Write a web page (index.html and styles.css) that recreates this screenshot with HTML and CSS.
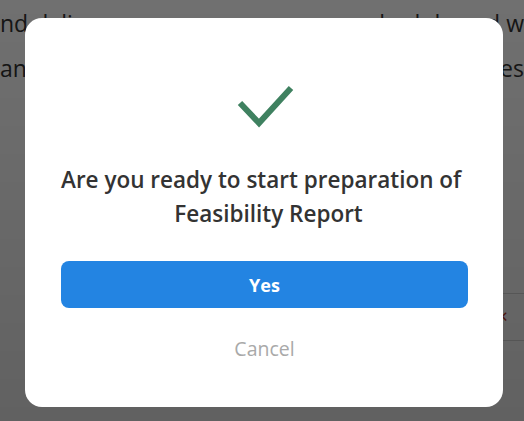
FILE: index.html
```html
<!DOCTYPE html>
<html lang="en">
<head>
<meta charset="utf-8">
<title>Confirm</title>
<link rel="stylesheet" href="styles.css">
</head>
<body>
<div class="page">
  <div class="bg-line bg-line-1"><span>nd delivery</span><span>schedule and w</span></div>
  <div class="bg-line bg-line-2"><span>and</span><span>quantities</span></div>
  <div class="bg-row">
    <span class="bg-x">&#x2715;</span>
  </div>
</div>

<div class="overlay">
  <div class="modal">
    <svg class="check" width="60" height="44" viewBox="0 0 60 44" aria-hidden="true">
      <polyline points="5,19 24,39 56,4" fill="none" stroke="#3f8160" stroke-width="6"/>
    </svg>
    <h2 class="title"><span class="title-line title-line-1">Are you ready to start preparation of</span> <span class="title-line title-line-2">Feasibility Report</span></h2>
    <button class="btn-yes" type="button">Yes</button>
    <button class="btn-cancel" type="button">Cancel</button>
  </div>
</div>
</body>
</html>
```
FILE: styles.css
```css
* { box-sizing: border-box; }
html, body { margin: 0; padding: 0; }
body {
  width: 524px;
  height: 421px;
  overflow: hidden;
  background: #ffffff;
  font-family: "Open Sans", "Noto Sans", sans-serif;
  color: #333333;
}
.page {
  width: 524px;
  height: 421px;
  overflow: hidden;
}
.bg-line {
  display: flex;
  justify-content: space-between;
  white-space: nowrap;
  font-size: 23px;
  line-height: 30px;
  color: #333333;
}
.bg-line-1 { padding-top: 8px; }
.bg-line-2 { margin-top: 15px; }
.bg-row {
  margin-top: 210px;
  margin-left: 480px;
  height: 48px;
  border-top: 1px solid #d8d8d8;
  border-bottom: 1px solid #d8d8d8;
  display: flex;
  align-items: center;
  padding-left: 16px;
}
.bg-x {
  color: #c0392b;
  font-size: 15px;
  font-family: "DejaVu Sans", sans-serif;
}
.overlay {
  position: fixed;
  inset: 0;
  background: linear-gradient(180deg, rgba(0,0,0,0.56), rgba(0,0,0,0.62));
  display: flex;
  align-items: flex-start;
  justify-content: flex-start;
  padding: 18px 0 0 25px;
}
.modal {
  width: 478px;
  height: 389px;
  background: #ffffff;
  border-radius: 17px;
  display: flex;
  flex-direction: column;
  align-items: center;
  padding: 66px 35px 0 36px;
}
.check {
  display: block;
  flex: none;
}
.title {
  margin: 35px 0 0;
  width: 100%;
  text-align: center;
  font-size: 22.5px;
  font-weight: 600;
  line-height: 34px;
  color: #333333;
}
.title-line {
  display: block;
  white-space: nowrap;
}
.title-line-1 { padding-right: 9px; }
.title-line-2 { padding-left: 8px; }
.btn-yes {
  margin-top: 30px;
  width: 100%;
  height: 47px;
  border: 0;
  border-radius: 8px;
  background: #2384e2;
  color: #ffffff;
  font-family: inherit;
  font-size: 18px;
  font-weight: 700;
  cursor: pointer;
}
.btn-cancel {
  margin-top: 29px;
  border: 0;
  background: none;
  padding: 0;
  height: 24px;
  line-height: 24px;
  font-family: inherit;
  font-size: 19.5px;
  color: #a9a9a9;
  cursor: pointer;
}
```
